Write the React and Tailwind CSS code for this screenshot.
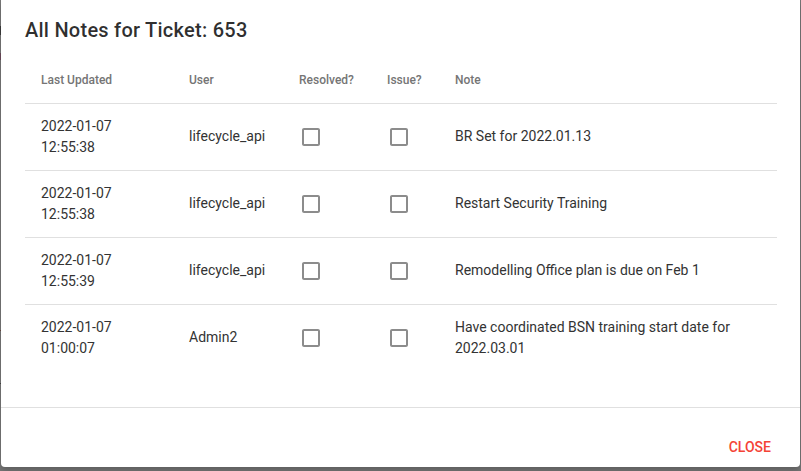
import React from "react";

const notes = [
  { date: "2022-01-07", time: "12:55:38", user: "lifecycle_api", note: "BR Set for 2022.01.13" },
  { date: "2022-01-07", time: "12:55:38", user: "lifecycle_api", note: "Restart Security Training" },
  { date: "2022-01-07", time: "12:55:39", user: "lifecycle_api", note: "Remodelling Office plan is due on Feb 1" },
  { date: "2022-01-07", time: "01:00:07", user: "Admin2", note: "Have coordinated BSN training start date for 2022.03.01" },
];

const BlankBox = () => (
  <svg width="24" height="24" viewBox="0 0 24 24" className="block">
    <path
      fill="rgba(0,0,0,0.45)"
      d="M19 5v14H5V5h14m0-2H5c-1.1 0-2 .9-2 2v14c0 1.1.9 2 2 2h14c1.1 0 2-.9 2-2V5c0-1.1-.9-2-2-2z"
    />
  </svg>
);

const App = () => {
  return (
    <div className="flex w-[801px] h-[471px] bg-[#777777] overflow-hidden font-['Roboto',sans-serif]">
      {/* dimmed page behind the dialog */}
      <div className="flex flex-col w-[1px] shrink-0">
        <div className="h-[26px]" />
        <div className="h-[9px] bg-[#3c3c3c]" />
        <div className="h-[18px]" />
        <div className="h-[7px] bg-[#6c4b5a]" />
        <div className="h-[270px]" />
        <div className="h-[1px] bg-[#6a4a40]" />
        <div className="h-[52px]" />
        <div className="h-[1px] bg-[#444444]" />
      </div>

      <div className="flex flex-col w-[799px] h-[467px] bg-white rounded-b-[4px] shadow-[0_4px_6px_rgba(0,0,0,0.2)]">
        <div className="h-[57px] px-6 pt-[14px]">
          <h2 className="text-[20px] leading-[32px] font-medium tracking-[0.25px] text-[rgba(0,0,0,0.82)]">
            All Notes for Ticket: 653
          </h2>
        </div>

        <div className="px-6 h-[350px]">
          <table className="w-[752px] table-fixed border-collapse text-left">
            <colgroup>
              <col className="w-[148px]" />
              <col className="w-[110px]" />
              <col className="w-[88px]" />
              <col className="w-[68px]" />
              <col className="w-[338px]" />
            </colgroup>
            <thead>
              <tr className="h-[46px] border-b border-[#e0e0e0]">
                {["Last Updated", "User", "Resolved?", "Issue?", "Note"].map((h) => (
                  <th
                    key={h}
                    className="px-4 text-[12px] leading-[16px] font-medium text-[#757575] align-middle"
                  >
                    {h}
                  </th>
                ))}
              </tr>
            </thead>
            <tbody className="text-[14px] leading-[21px] text-[#333333]">
              {notes.map((n, i) => (
                <tr
                  key={i}
                  className={`h-[67px] ${i < notes.length - 1 ? "border-b border-[#e0e0e0]" : ""}`}
                >
                  <td className="px-4 align-middle">
                    <div>{n.date}</div>
                    <div>{n.time}</div>
                  </td>
                  <td className="px-4 align-middle">{n.user}</td>
                  <td className="px-4 align-middle">
                    <BlankBox />
                  </td>
                  <td className="px-4 align-middle">
                    <BlankBox />
                  </td>
                  <td className="px-4 align-middle">{n.note}</td>
                </tr>
              ))}
            </tbody>
          </table>
        </div>

        <div className="flex justify-end border-t border-[#e0e0e0] pt-[21px] pr-[21px]">
          <button className="h-9 px-2 text-[14px] font-medium uppercase text-[#f44336]">
            Close
          </button>
        </div>
      </div>
    </div>
  );
};

export default App;
